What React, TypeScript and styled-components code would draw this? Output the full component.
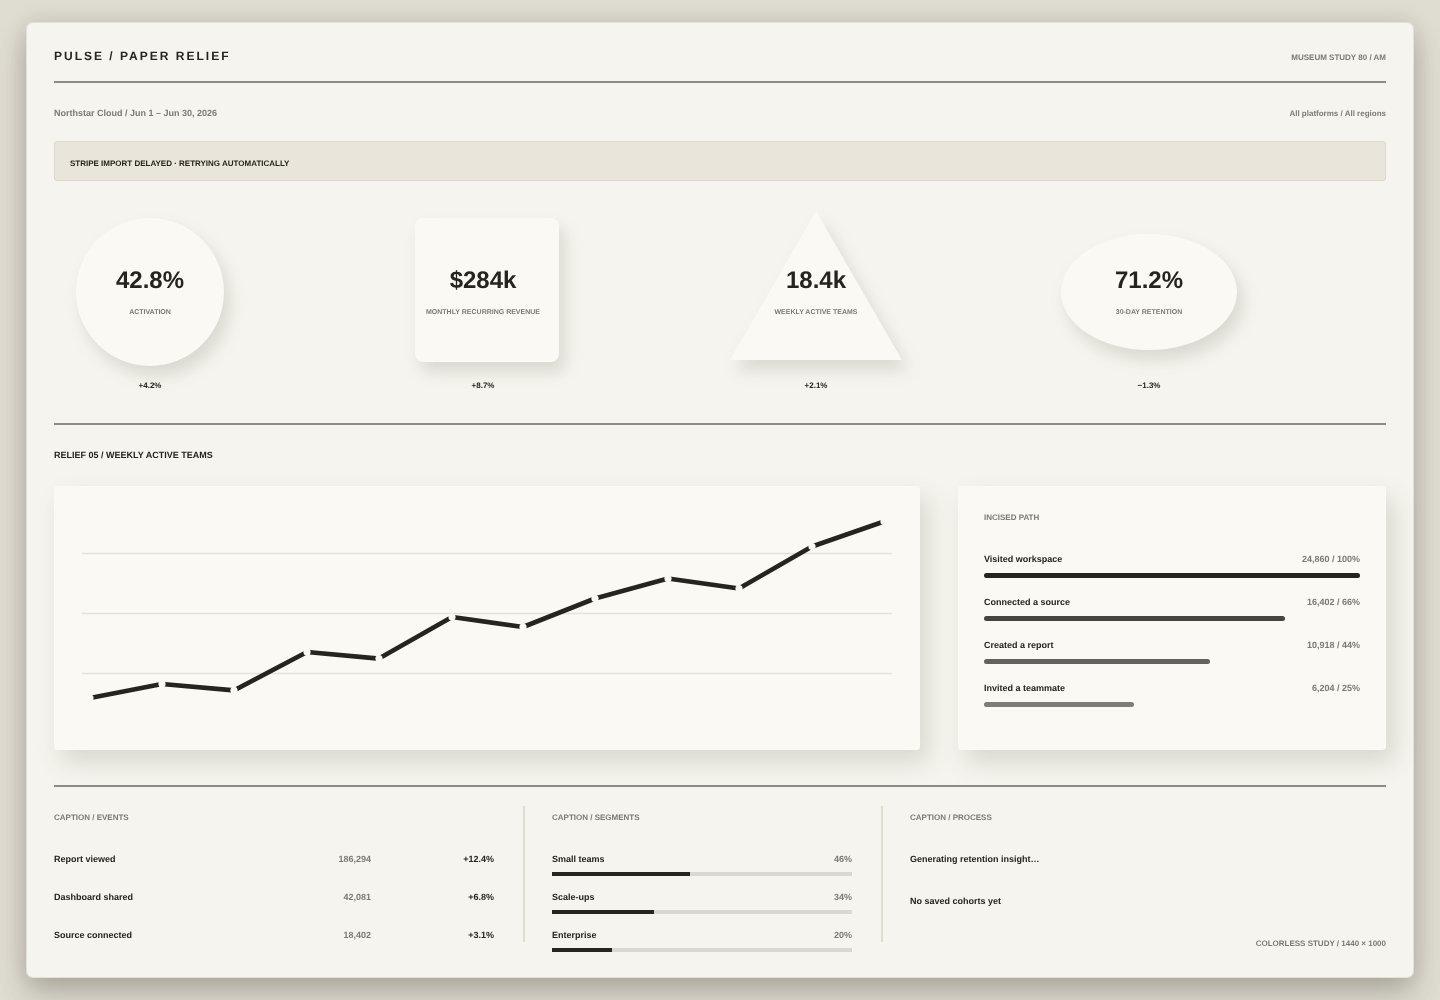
import React from 'react';
import styled, {createGlobalStyle} from 'styled-components';

const INK = '#25241f';
const MUTED = '#7b7a73';

const kpis = [
    {value: '42.8%', label: 'ACTIVATION', delta: '+4.2%', shape: 'circle'},
    {value: '$284k', label: 'MONTHLY RECURRING REVENUE', delta: '+8.7%', shape: 'square'},
    {value: '18.4k', label: 'WEEKLY ACTIVE TEAMS', delta: '+2.1%', shape: 'triangle'},
    {value: '71.2%', label: '30-DAY RETENTION', delta: '−1.3%', shape: 'ellipse'},
];

const steps = [
    {name: 'Visited workspace', stat: '24,860 / 100%', width: 100, color: '#25241f'},
    {name: 'Connected a source', stat: '16,402 / 66%', width: 80, color: '#45443f'},
    {name: 'Created a report', stat: '10,918 / 44%', width: 60, color: '#63625c'},
    {name: 'Invited a teammate', stat: '6,204 / 25%', width: 40, color: '#7e7d76'},
];

const events = [
    {name: 'Report viewed', count: '186,294', delta: '+12.4%'},
    {name: 'Dashboard shared', count: '42,081', delta: '+6.8%'},
    {name: 'Source connected', count: '18,402', delta: '+3.1%'},
];

const segments = [
    {name: 'Small teams', share: 46},
    {name: 'Scale-ups', share: 34},
    {name: 'Enterprise', share: 20},
];

const points: [number, number][] = [
    [8, 184], [80, 170], [152, 176.4], [225, 138], [297, 144.6], [370, 103],
    [441, 113], [513, 84.5], [586, 64.5], [657, 74.5], [730, 32.5], [802, 7.5],
];

const Shape = ({kind}: { kind: string }) => {
    if (kind === 'circle') return <Circle/>;
    if (kind === 'square') return <Square/>;
    if (kind === 'triangle') return <TriangleWrap><Triangle/></TriangleWrap>;
    return <Ellipse/>;
};

const App = () => {
    return (
        <>
            <Global/>
            <Sheet>
                <Header>
                    <Title>PULSE / PAPER RELIEF</Title>
                    <Study>MUSEUM STUDY 80 / AM</Study>
                </Header>
                <Meta>
                    <Account>Northstar Cloud / Jun 1 – Jun 30, 2026</Account>
                    <Scope>All platforms / All regions</Scope>
                </Meta>
                <Alert>STRIPE IMPORT DELAYED · RETRYING AUTOMATICALLY</Alert>
                <KpiRow>
                    {kpis.map(k => (
                        <Kpi key={k.label}>
                            <Stage>
                                <Shape kind={k.shape}/>
                                <KpiText>
                                    <KpiValue>{k.value}</KpiValue>
                                    <KpiLabel>{k.label}</KpiLabel>
                                </KpiText>
                            </Stage>
                            <KpiDelta>{k.delta}</KpiDelta>
                        </Kpi>
                    ))}
                </KpiRow>
                <SectionTitle>RELIEF 05 / WEEKLY ACTIVE TEAMS</SectionTitle>
                <Panels>
                    <ChartPanel>
                        <svg width="810" height="208" viewBox="0 0 810 208">
                            {[39.5, 99.5, 159.5].map(y => (
                                <line key={y} x1="0" x2="810" y1={y} y2={y} stroke="#e4e2da" strokeWidth="1.5"/>
                            ))}
                            <polyline
                                points={points.map(p => p.join(',')).join(' ')}
                                fill="none"
                                stroke={INK}
                                strokeWidth="4.6"
                                strokeLinejoin="round"
                            />
                            {points.map(([x, y]) => (
                                <circle key={x} cx={x} cy={y} r="3.6" fill="#faf9f4"/>
                            ))}
                        </svg>
                    </ChartPanel>
                    <PathPanel>
                        <PanelCaption>INCISED PATH</PanelCaption>
                        {steps.map(s => (
                            <Step key={s.name}>
                                <RowLine>
                                    <RowName>{s.name}</RowName>
                                    <RowStat>{s.stat}</RowStat>
                                </RowLine>
                                <StepBar $color={s.color} style={{width: `${s.width}%`}}/>
                            </Step>
                        ))}
                    </PathPanel>
                </Panels>
                <Captions>
                    <EventsCol>
                        <Caption>CAPTION / EVENTS</Caption>
                        {events.map(e => (
                            <EventRow key={e.name}>
                                <RowName>{e.name}</RowName>
                                <RowStat>{e.count}</RowStat>
                                <EventDelta>{e.delta}</EventDelta>
                            </EventRow>
                        ))}
                    </EventsCol>
                    <SegmentsCol>
                        <Caption>CAPTION / SEGMENTS</Caption>
                        {segments.map(s => (
                            <Segment key={s.name}>
                                <RowLine>
                                    <RowName>{s.name}</RowName>
                                    <RowStat>{s.share}%</RowStat>
                                </RowLine>
                                <Track>
                                    <Fill style={{width: `${s.share}%`}}/>
                                </Track>
                            </Segment>
                        ))}
                    </SegmentsCol>
                    <ProcessCol>
                        <Caption>CAPTION / PROCESS</Caption>
                        <Process>Generating retention insight…</Process>
                        <Process>No saved cohorts yet</Process>
                        <Footnote>COLORLESS STUDY / 1440 × 1000</Footnote>
                    </ProcessCol>
                </Captions>
            </Sheet>
        </>
    );
};

export default App;

const Global = createGlobalStyle`
  html, body {
    margin: 0;
    padding: 0;
  }

  body {
    width: 1440px;
    height: 1000px;
    overflow: hidden;
    background: #dfdcd2;
    font-family: "Liberation Sans", Arial, sans-serif;
    color: ${INK};
    text-rendering: geometricPrecision;
  }
`

const Sheet = styled.main`
  box-sizing: border-box;
  width: 1386px;
  height: 954px;
  margin: 23px 27px;
  padding: 0 27px;
  background: #f5f4ee;
  border-radius: 6px;
  will-change: transform;
  box-shadow: 0 0 0 1px #e3e1d8, 0 16px 30px rgba(70, 66, 52, 0.3), 0 0 24px rgba(70, 66, 52, 0.14);
`

const Header = styled.header`
  display: flex;
  justify-content: space-between;
  align-items: center;
  height: 60px;
  padding-top: 8px;
  box-sizing: border-box;
  border-bottom: 2px solid #8c8b84;
`

const Title = styled.h1`
  margin: 0;
  font-size: 12px;
  font-weight: 700;
  letter-spacing: 2px;
`

const Study = styled.span`
  font-size: 8px;
  font-weight: 700;
  color: ${MUTED};
  padding-top: 2px;
`

const Meta = styled.div`
  display: flex;
  justify-content: space-between;
  align-items: center;
  box-sizing: border-box;
  height: 58px;
  padding-top: 2px;
`

const Account = styled.span`
  font-size: 9px;
  font-weight: 700;
  color: ${MUTED};
`

const Scope = styled.span`
  font-size: 8px;
  font-weight: 700;
  color: ${MUTED};
`

const Alert = styled.div`
  box-sizing: border-box;
  height: 40px;
  display: flex;
  align-items: center;
  padding: 5px 15px 0;
  background: #e9e5da;
  border: 1px solid #dcd9cc;
  border-radius: 3px;
  font-size: 8px;
  font-weight: 700;
`

const KpiRow = styled.section`
  display: grid;
  grid-template-columns: repeat(4, 333px);
  height: 244px;
  padding-top: 30px;
  box-sizing: border-box;
  border-bottom: 2px solid #8c8b84;
`

const Kpi = styled.div`
  width: 192px;
  display: flex;
  flex-direction: column;
  align-items: center;
`

const Stage = styled.div`
  display: grid;
  width: 192px;
  height: 170px;
  justify-items: center;

  > * {
    grid-area: 1 / 1;
  }
`

const lift = `filter: drop-shadow(6px 10px 8px rgba(80, 76, 60, 0.16));`

const Circle = styled.div`
  width: 148px;
  height: 148px;
  margin-top: 7px;
  border-radius: 50%;
  background: #faf9f4;
  ${lift}
`

const Square = styled.div`
  width: 144px;
  height: 144px;
  margin: 7px 0 0 8px;
  border-radius: 8px;
  background: #faf9f4;
  ${lift}
`

const TriangleWrap = styled.div`
  width: 172px;
  height: 149px;
  ${lift}
`

const Triangle = styled.div`
  width: 100%;
  height: 100%;
  background: #faf9f4;
  clip-path: polygon(50% 0, 100% 100%, 0 100%);
`

const Ellipse = styled.div`
  width: 176px;
  height: 116px;
  margin-top: 23px;
  border-radius: 50%;
  background: #faf9f4;
  ${lift}
`

const KpiText = styled.div`
  display: flex;
  flex-direction: column;
  align-items: center;
  padding-top: 56px;
  z-index: 1;
`

const KpiValue = styled.div`
  font-size: 24px;
  line-height: 28px;
  font-weight: 700;
`

const KpiLabel = styled.div`
  margin-top: 13px;
  font-size: 7px;
  line-height: 10px;
  font-weight: 700;
  color: ${MUTED};
  white-space: nowrap;
`

const KpiDelta = styled.div`
  font-size: 8px;
  line-height: 10px;
  font-weight: 700;
`

const SectionTitle = styled.h2`
  margin: 0;
  padding-top: 25px;
  height: 36px;
  font-size: 9px;
  line-height: 10px;
  font-weight: 700;
`

const Panels = styled.section`
  display: grid;
  grid-template-columns: 866px 428px;
  column-gap: 38px;
  height: 264px;
`

const ChartPanel = styled.div`
  box-sizing: border-box;
  padding: 28px;
  background: #faf9f4;
  border-radius: 4px;
  box-shadow: 8px 12px 24px rgba(80, 76, 60, 0.17);

  svg {
    display: block;
  }
`

const PathPanel = styled.div`
  box-sizing: border-box;
  padding: 27px 26px 0;
  background: #faf9f4;
  border-radius: 4px;
  box-shadow: 8px 12px 24px rgba(80, 76, 60, 0.17);
`

const PanelCaption = styled.div`
  height: 10px;
  font-size: 8px;
  line-height: 10px;
  font-weight: 700;
  color: ${MUTED};
  margin-bottom: 31px;
`

const Step = styled.div`
  height: 43px;
`

const RowLine = styled.div`
  display: flex;
  justify-content: space-between;
  align-items: center;
  height: 10px;
`

const RowName = styled.span`
  font-size: 9px;
  line-height: 10px;
  font-weight: 700;
`

const RowStat = styled.span`
  font-size: 9px;
  line-height: 10px;
  font-weight: 700;
  color: ${MUTED};
`

const StepBar = styled.div<{ $color: string }>`
  height: 5px;
  margin-top: 9px;
  border-radius: 3px;
  background: ${p => p.$color};
`

const Captions = styled.section`
  display: grid;
  grid-template-columns: 469px 358px 1fr;
  grid-template-rows: 136px;
  margin-top: 35px;
  padding-top: 19px;
  border-top: 2px solid #8c8b84;
`

const Caption = styled.div`
  height: 10px;
  font-size: 8px;
  line-height: 10px;
  font-weight: 700;
  color: ${MUTED};
  margin-top: 7px;
  margin-bottom: 31px;
`

const EventsCol = styled.div`
  padding-right: 29px;
`

const EventRow = styled.div`
  display: grid;
  grid-template-columns: 1fr 80px 123px;
  height: 38px;
  text-align: right;

  > :first-child {
    text-align: left;
  }
`

const EventDelta = styled.span`
  font-size: 9px;
  line-height: 10px;
  font-weight: 700;
`

const SegmentsCol = styled.div`
  box-sizing: border-box;
  border-left: 2px solid #e0ded3;
  padding: 0 29px 0 27px;
`

const Segment = styled.div`
  height: 38px;
`

const Track = styled.div`
  height: 4px;
  margin-top: 8px;
  background: #d9d8d2;
`

const Fill = styled.div`
  height: 100%;
  background: ${INK};
`

const ProcessCol = styled.div`
  box-sizing: border-box;
  border-left: 2px solid #e0ded3;
  padding-left: 27px;
`

const Process = styled.div`
  height: 42px;
  font-size: 9px;
  line-height: 10px;
  font-weight: 700;
`

const Footnote = styled.div`
  margin-top: 1px;
  font-size: 8px;
  line-height: 10px;
  font-weight: 700;
  text-align: right;
  color: ${MUTED};
`
